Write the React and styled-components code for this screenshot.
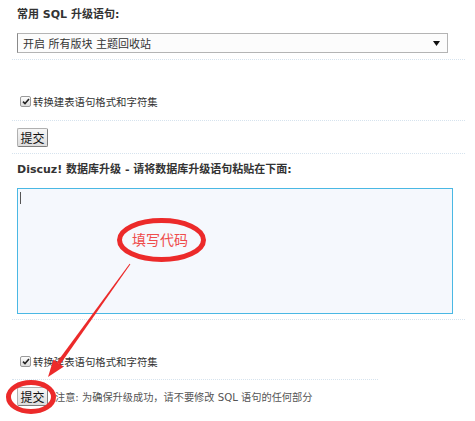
import React from 'react'
import styled, { createGlobalStyle } from 'styled-components'

const GlobalStyle = createGlobalStyle`
    body {
        margin: 0;
        background: #fff;
        font-family: "DejaVu Sans", "Noto Sans CJK SC", sans-serif;
        font-size: 10.4px;
        color: #333;
    }
`;

const Page = styled.div`
    position: relative;
    width: 475px;
    height: 421px;
    padding-left: 12px;
    box-sizing: border-box;
    overflow: hidden;
`;

const Section = styled.div`
    width: ${p => p.$width || 453}px;
    box-sizing: border-box;
    padding: ${p => p.$pt}px 5px ${p => p.$pb}px;
    border-bottom: ${p => p.$last ? 'none' : '1px dotted #d6e3ee'};
`;

const Heading = styled.div`
    font-size: 11px;
    font-weight: bold;
    line-height: 18px;
    height: 18px;
    color: #333;
    white-space: nowrap;
`;

const Select = styled.div`
    margin-top: 9px;
    width: 431px;
    height: 20px;
    box-sizing: border-box;
    border: 1px solid #b4b4b4;
    border-left-color: #8a8a8a;
    background: #fcfcfc;
    display: flex;
    align-items: center;
    justify-content: space-between;
    padding: 0 7px 0 5px;
    font-size: 11px;
`;

const CheckRow = styled.label`
    display: flex;
    align-items: center;
    gap: 2px;
    height: 18px;
    padding-left: 3px;
`;

const Box = styled.span`
    width: 11px;
    height: 11px;
    box-sizing: border-box;
    border: 1px solid #9a9a9a;
    border-radius: 2px;
    background: linear-gradient(#fdfdfd, #dcdcdc);
    display: flex;
    align-items: center;
    justify-content: center;
`;

const Button = styled.button`
    width: 31px;
    height: 19px;
    padding: 0;
    box-sizing: border-box;
    border: 1px solid #7d7d7d;
    border-top-color: #b0b0b0;
    border-left-color: #b0b0b0;
    border-radius: 2px;
    background: linear-gradient(#f7f7f7, #dddddd);
    font-family: "Noto Sans CJK SC", sans-serif;
    font-size: 12px;
    line-height: 17px;
    color: #111;
`;

const TextArea = styled.div`
    margin-top: 9px;
    width: 436px;
    height: 126px;
    box-sizing: border-box;
    border: 1px solid #4ab8e4;
    background: #f5f8fd;
    padding: 3px 2px;
`;

const Caret = styled.span`
    display: block;
    width: 1px;
    height: 12px;
    background: #555;
`;

const SubmitRow = styled.div`
    display: flex;
    align-items: center;
    gap: 7px;
`;

const Note = styled.span`
    color: #555;
    font-size: 10.2px;
    white-space: nowrap;
`;

const Overlay = styled.svg`
    position: absolute;
    top: 0;
    left: 0;
    pointer-events: none;
`;

function Check({ label }) {
    return (
        <CheckRow>
            <Box>
                <svg width="8" height="7" viewBox="0 0 8 7">
                    <path d="M1 3.6 L3 5.6 L7 1" fill="none" stroke="#222" strokeWidth="1.6" />
                </svg>
            </Box>
            {label}
        </CheckRow>
    );
}

export default function App() {
    return (
        <Page>
            <GlobalStyle />
            <Section $pt={6} $pb={6}>
                <Heading>常用 SQL 升级语句:</Heading>
                <Select>
                    <span>开启 所有版块 主题回收站</span>
                    <svg width="7" height="5" viewBox="0 0 7 5">
                        <path d="M0 0 H7 L3.5 5 Z" fill="#111" />
                    </svg>
                </Select>
            </Section>
            <Section $pt={32} $pb={10}>
                <Check label="转换建表语句格式和字符集" />
            </Section>
            <Section $pt={7} $pb={6}>
                <Button>提交</Button>
            </Section>
            <Section $pt={7} $pb={5}>
                <Heading>Discuz! 数据库升级 - 请将数据库升级语句粘贴在下面:</Heading>
                <TextArea>
                    <Caret />
                </TextArea>
            </Section>
            <Section $pt={32} $pb={9} $width={366}>
                <Check label="转换建表语句格式和字符集" />
            </Section>
            <Section $pt={7} $pb={0} $last>
                <SubmitRow>
                    <Button>提交</Button>
                    <Note>注意: 为确保升级成功，请不要修改 SQL 语句的任何部分</Note>
                </SubmitRow>
            </Section>

            <Overlay width="475" height="421" viewBox="0 0 475 421">
                <ellipse cx="161.5" cy="240" rx="42" ry="19.5" fill="none" stroke="#ec2a2a" strokeWidth="5" />
                <text x="132" y="245" fontSize="14" fill="#ef4c4c" fontFamily="'Noto Sans CJK SC', sans-serif">填写代码</text>
                <polygon points="129.6,263.7 130.4,264.3 60.1,364.6 56.9,362.2" fill="#ec2a2a" />
                <polygon points="48,377 53.4,359.6 63.6,366.8" fill="#ec2a2a" />
                <ellipse cx="31" cy="397" rx="22.5" ry="14.5" fill="none" stroke="#ec2a2a" strokeWidth="5" />
            </Overlay>
        </Page>
    );
}
